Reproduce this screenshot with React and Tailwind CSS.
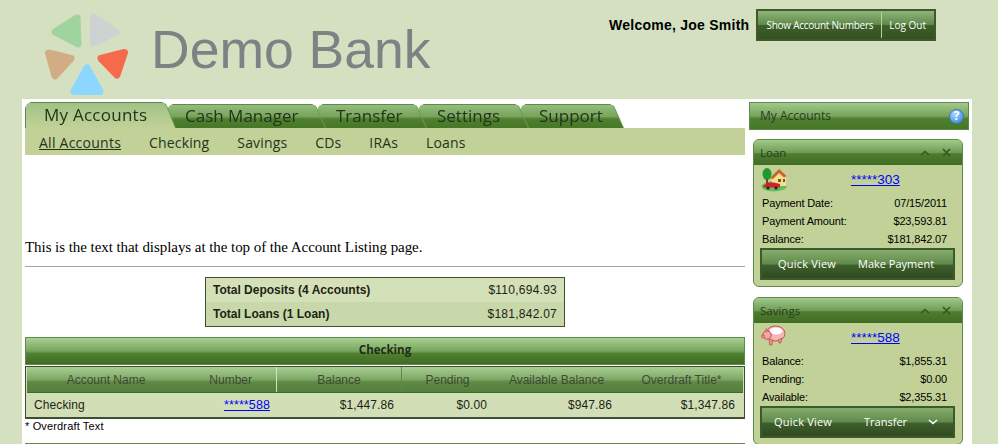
import React from 'react';

const Logo = () => (
  <svg width="88" height="84" viewBox="0 0 88 84" className="shrink-0">
    <g strokeLinejoin="round" strokeWidth="7">
      <path d="M33 5 L11 19 L34 31 Z" fill="#a0d49f" stroke="#a0d49f" />
      <path d="M49.5 4 L72 19 L49.5 30 Z" fill="#cfd2d2" stroke="#cfd2d2" />
      <path d="M4.5 40 L27 45.5 L11 63 Z" fill="#d2ac85" stroke="#d2ac85" />
      <path d="M80.5 39.5 L57 45.5 L73 62 Z" fill="#f6694c" stroke="#f6694c" />
      <path d="M43 55 L30 78.5 L56 78.5 Z" fill="#8cd6ff" stroke="#8cd6ff" />
    </g>
  </svg>
);

const HouseIcon = () => (
  <svg width="26" height="25" viewBox="0 0 26 25">
    <ellipse cx="13" cy="19.5" rx="12.5" ry="5" fill="#5fbf5f" />
    <path d="M11 11 L19 3 L25 11 V19 H11 Z" fill="#f6e08a" />
    <path d="M9 11 L18 2 L25.5 9 L23 10.5 L18 6 L12 12 Z" fill="#c8622e" />
    <rect x="17" y="12" width="3" height="3" fill="#7a5230" />
    <rect x="22" y="12" width="2" height="3" fill="#7a5230" />
    <ellipse cx="6" cy="7" rx="4.5" ry="6" fill="#1f9a2f" />
    <rect x="5" y="12" width="2" height="6" fill="#6b4a26" />
    <path d="M2 19 L7 15.5 H13 L19 17 V20.5 H3 Z" fill="#d3202a" />
    <circle cx="7" cy="21" r="1.6" fill="#222" />
    <circle cx="15" cy="21" r="1.6" fill="#222" />
  </svg>
);

const PigIcon = () => (
  <svg width="25" height="21" viewBox="0 0 25 21">
    <ellipse cx="14.5" cy="8.5" rx="9.5" ry="7.5" fill="#f9b5b5" stroke="#a8433f" strokeWidth="0.8" />
    <ellipse cx="15" cy="6" rx="6.5" ry="3.5" fill="#ffffff" />
    <circle cx="6" cy="10" r="4.2" fill="#f7a5a5" stroke="#a8433f" strokeWidth="0.8" />
    <ellipse cx="2" cy="11.5" rx="1.8" ry="1.5" fill="#e88" stroke="#a8433f" strokeWidth="0.5" />
    <path d="M4.5 6.5 L5 3.5 L8.5 6 Z" fill="#e88" stroke="#a8433f" strokeWidth="0.4" />
    <path d="M8 14 L12 15 L11 20 L8.5 20 Z M17 15 L21 13 L20 18 L18 18 Z" fill="#e88" stroke="#a8433f" strokeWidth="0.5" />
  </svg>
);

const HelpIcon = () => (
  <div className="w-[15px] h-[15px] rounded-full bg-[radial-gradient(circle_at_35%_30%,#a8d4ff,#2a7fe0)] border border-[#3a78b8] flex items-center justify-center text-white text-[12px] font-bold leading-none">
    ?
  </div>
);

const Chevron = ({ up }) => (
  <svg width="10" height="6" viewBox="0 0 10 6">
    <path d={up ? 'M1 5 L5 1.5 L9 5' : 'M1 1 L5 4.5 L9 1'} fill="none" stroke="currentColor" strokeWidth="1.6" />
  </svg>
);

const Close = () => (
  <svg width="9" height="9" viewBox="0 0 9 9">
    <path d="M1 1 L8 8 M8 1 L1 8" fill="none" stroke="#2f5a22" strokeWidth="1.6" />
  </svg>
);

const tabs = [
  { label: 'Cash Manager', box: 'w-[158px] z-30', pad: 'pl-[18px]' },
  { label: 'Transfer', box: 'w-[109px] z-20', pad: 'pl-[19px]' },
  { label: 'Settings', box: 'w-[110px] z-10', pad: 'pl-[19px]' },
  { label: 'Support', box: 'w-[103px] z-0', pad: 'pl-[19px]' },
];

const subTabs = ['Checking', 'Savings', 'CDs', 'IRAs', 'Loans'];

const Widget = ({ title, icon, number, rows, children }) => (
  <div className="rounded-[6px] border border-[#5f8a4c] bg-[#c2d197] overflow-hidden">
    <div className="h-[25px] pl-[6px] pr-[5px] flex items-center justify-between text-[11.5px] text-[#2c3a22] font-['Open_Sans',sans-serif] bg-[linear-gradient(#a2c98a_0%,#6e9d55_50%,#4d7d30_55%,#3f6d24_100%)]">
      <span className="pt-[1px]">{title}</span>
      <span className="flex items-center gap-[12px] pr-[6px] text-[#2f5a22]">
        <Chevron up />
        <Close />
      </span>
    </div>
    <div className="flex h-[28px] pl-[7px] pt-[2px]">
      <div className="w-[26px]">{icon}</div>
      <a href="#" className="ml-[64px] text-[13.5px] text-[#0000ff] underline mt-[3px]">{number}</a>
    </div>
    <div className="px-[8px] pt-[1px] text-[11px] tracking-[-0.15px] text-black leading-[18px]">
      {rows.map(([k, v]) => (
        <div key={k} className="flex justify-between pr-[7px]">
          <span>{k}</span>
          <span>{v}</span>
        </div>
      ))}
    </div>
    {children}
  </div>
);

const ActionBar = ({ children }) => (
  <div className="ml-[6px] mr-[7px] mb-[6px] h-[32px] border-2 border-[#3d5a2c] flex items-center text-[11px] font-['Open_Sans',sans-serif] text-white bg-[linear-gradient(#86ad6c_0%,#5f8a4c_50%,#3f5f2a_54%,#2f4a20_100%)]">
    {children}
  </div>
);

export default function App() {
  return (
    <div className="w-[998px] h-[444px] overflow-hidden bg-[#d4e0c0] font-['Liberation_Sans',sans-serif]">
      {/* header */}
      <div className="h-[99px] flex pl-[44px]">
        <div className="pt-[13px]">
          <Logo />
        </div>
        <div className="ml-[19px] mt-[14px] text-[53.5px] leading-[72px] text-[#7f8284]">
          Demo Bank
        </div>
        <div className="ml-auto mr-[62px] mt-[9px] flex items-start">
          <span className="mt-[6px] mr-[7px] text-[14px] font-bold text-black tracking-[0.25px]">Welcome, Joe Smith</span>
          <div className="h-[32px] border-2 border-[#3d5a2c] flex items-center text-[10px] text-white font-['Open_Sans',sans-serif] bg-[linear-gradient(#8fb577_0%,#5f8a4c_48%,#3f5f2a_52%,#34511f_100%)]">
            <span className="pl-[8px] pr-[8px] h-[26px] flex items-center border-r border-[#b9cca6] tracking-[-0.25px]">Show Account Numbers</span>
            <span className="pl-[7px] pr-[8px]">Log Out</span>
          </div>
        </div>
      </div>

      {/* body */}
      <div className="ml-[22px] mr-[26px] h-[345px] bg-white flex">
        <div className="w-[720px] ml-[3px] pt-[3px]">
          <div className="flex items-end h-[26px] font-['Open_Sans',sans-serif] text-[17px] text-[#25331c]">
            <div className="relative z-40 w-[150px] [filter:drop-shadow(1px_0_0_#6e9a58)]">
              <div className="h-[26px] pb-[1px] border-t border-l border-[#5f8a4c] flex items-center pl-[18px] tracking-[0.25px] [clip-path:polygon(0_6px,2px_2px,6px_0,calc(100%_-_14px)_0,calc(100%_-_10px)_2px,calc(100%_-_8px)_6px,100%_100%,0_100%)] bg-[linear-gradient(#a0c286,#c2d197)]">
                My Accounts
              </div>
            </div>
            {tabs.map((t) => (
              <div key={t.label} className={`relative -ml-[8px] ${t.box} [filter:drop-shadow(1px_0_0_#6e9a58)]`}>
                <div className={`h-[24px] pb-[1px] border-t border-[#5f8a4c] flex items-center ${t.pad} [clip-path:polygon(0_6px,2px_2px,6px_0,calc(100%_-_14px)_0,calc(100%_-_10px)_2px,calc(100%_-_8px)_6px,100%_100%,0_100%)] bg-[linear-gradient(#94bd7a_0%,#77a45d_50%,#50802f_60%,#457726_100%)]`}>
                  {t.label}
                </div>
              </div>
            ))}
          </div>
          <div className="h-[27px] bg-[#c2d197] flex items-center pl-[14px] pt-[2px] gap-[28px] font-['Open_Sans',sans-serif] text-[14px] tracking-[0.15px] text-[#25331c]">
            <span className="underline tracking-[0.25px]">All Accounts</span>
            {subTabs.map((s) => (
              <span key={s}>{s}</span>
            ))}
          </div>

          <div className="pt-[83px] font-['Liberation_Serif',serif] text-[15px] tracking-[-0.06px] leading-[18px] text-black">
            This is the text that displays at the top of the Account Listing page.
          </div>
          <div className="mt-[10px] border-t border-[#a3a3a3]" />

          {/* totals */}
          <div className="mt-[10px] ml-[180px] w-[360px] border border-[#3d4f30] text-[12px] text-[#1c2415]">
            <div className="h-[24px] bg-[#d4e0b8] flex items-center justify-between px-[7px]">
              <span className="font-bold">Total Deposits (4 Accounts)</span>
              <span className="tracking-[0.25px]">$110,694.93</span>
            </div>
            <div className="h-[24px] bg-[#c8d8aa] flex items-center justify-between px-[7px]">
              <span className="font-bold">Total Loans (1 Loan)</span>
              <span className="tracking-[0.25px]">$181,842.07</span>
            </div>
          </div>

          {/* checking */}
          <div className="mt-[10px] h-[28px] pb-[2px] border border-[#5f8a4c] flex items-center justify-center text-[11.5px] font-bold text-[#1f2c16] font-['Open_Sans',sans-serif] bg-[linear-gradient(#a8cf92_0%,#78a55e_50%,#50802f_60%,#3f6d24_100%)]">
            Checking
          </div>
          <div className="mt-[1px] border border-[#3d4f30] border-b-2 bg-[#d2deb6]">
            <div className="h-[26px] mx-[1px] flex items-center text-[12px] text-[#3f4a34] bg-[linear-gradient(#a8cf92_0%,#7ea666_50%,#5d8a45_60%,#557f3c_100%)] border-b border-[#3f6d24]">
              <span className="w-[158px] text-center">Account Name</span>
              <span className="w-[92px] h-full flex items-center justify-end pr-[24px] border-r border-[#d4e0c0]">Number</span>
              <span className="w-[125px] h-full flex items-center justify-center border-r border-[#5d8a45]">Balance</span>
              <span className="w-[91px] text-center">Pending</span>
              <span className="w-[127px] text-center">Available Balance</span>
              <span className="flex-1 text-center">Overdraft Title*</span>
            </div>
            <div className="h-[24px] flex items-center text-[12px] tracking-[0.1px] text-[#1c2415]">
              <span className="w-[244px] pl-[8px]">Checking</span>
              <a href="#" className="w-[0px] flex justify-end text-[12.5px] text-[#0000ff] underline"><span>*****588</span></a>
              <span className="w-[124px] text-right">$1,447.86</span>
              <span className="w-[93px] text-right">$0.00</span>
              <span className="w-[125px] text-right">$947.86</span>
              <span className="flex-1 text-right pr-[9px]">$1,347.86</span>
            </div>
          </div>
          <div className="text-[11px] tracking-[0.15px] leading-[14px] text-black">* Overdraft Text</div>
          <div className="mt-[10px] border-t border-[#5f8a4c]" />
        </div>

        {/* sidebar */}
        <div className="w-[220px] ml-[4px] pt-[3px]">
          <div className="w-[220px] h-[28px] border border-[#5f8a4c] flex items-center justify-between pl-[10px] pr-[4px] text-[12px] text-[#2c3a22] font-['Open_Sans',sans-serif] bg-[linear-gradient(#a2c98a_0%,#77a45d_50%,#50802f_60%,#457726_100%)]">
            <span>My Accounts</span>
            <HelpIcon />
          </div>
          <div className="w-[210px] ml-[4px] mt-[9px] flex flex-col gap-[10px]">
            <Widget
              title="Loan"
              icon={<HouseIcon />}
              number="*****303"
              rows={[['Payment Date:', '07/15/2011'], ['Payment Amount:', '$23,593.81'], ['Balance:', '$181,842.07']]}
            >
              <ActionBar>
                <span className="ml-[16px] tracking-[0.2px]">Quick View</span>
                <span className="ml-[22px]">Make Payment</span>
              </ActionBar>
            </Widget>
            <Widget
              title="Savings"
              icon={<PigIcon />}
              number="*****588"
              rows={[['Balance:', '$1,855.31'], ['Pending:', '$0.00'], ['Available:', '$2,355.31']]}
            >
              <ActionBar>
                <span className="ml-[12px] tracking-[0.2px]">Quick View</span>
                <span className="ml-[32px]">Transfer</span>
                <span className="ml-[21px]"><Chevron /></span>
              </ActionBar>
            </Widget>
          </div>
        </div>
      </div>
    </div>
  );
}
